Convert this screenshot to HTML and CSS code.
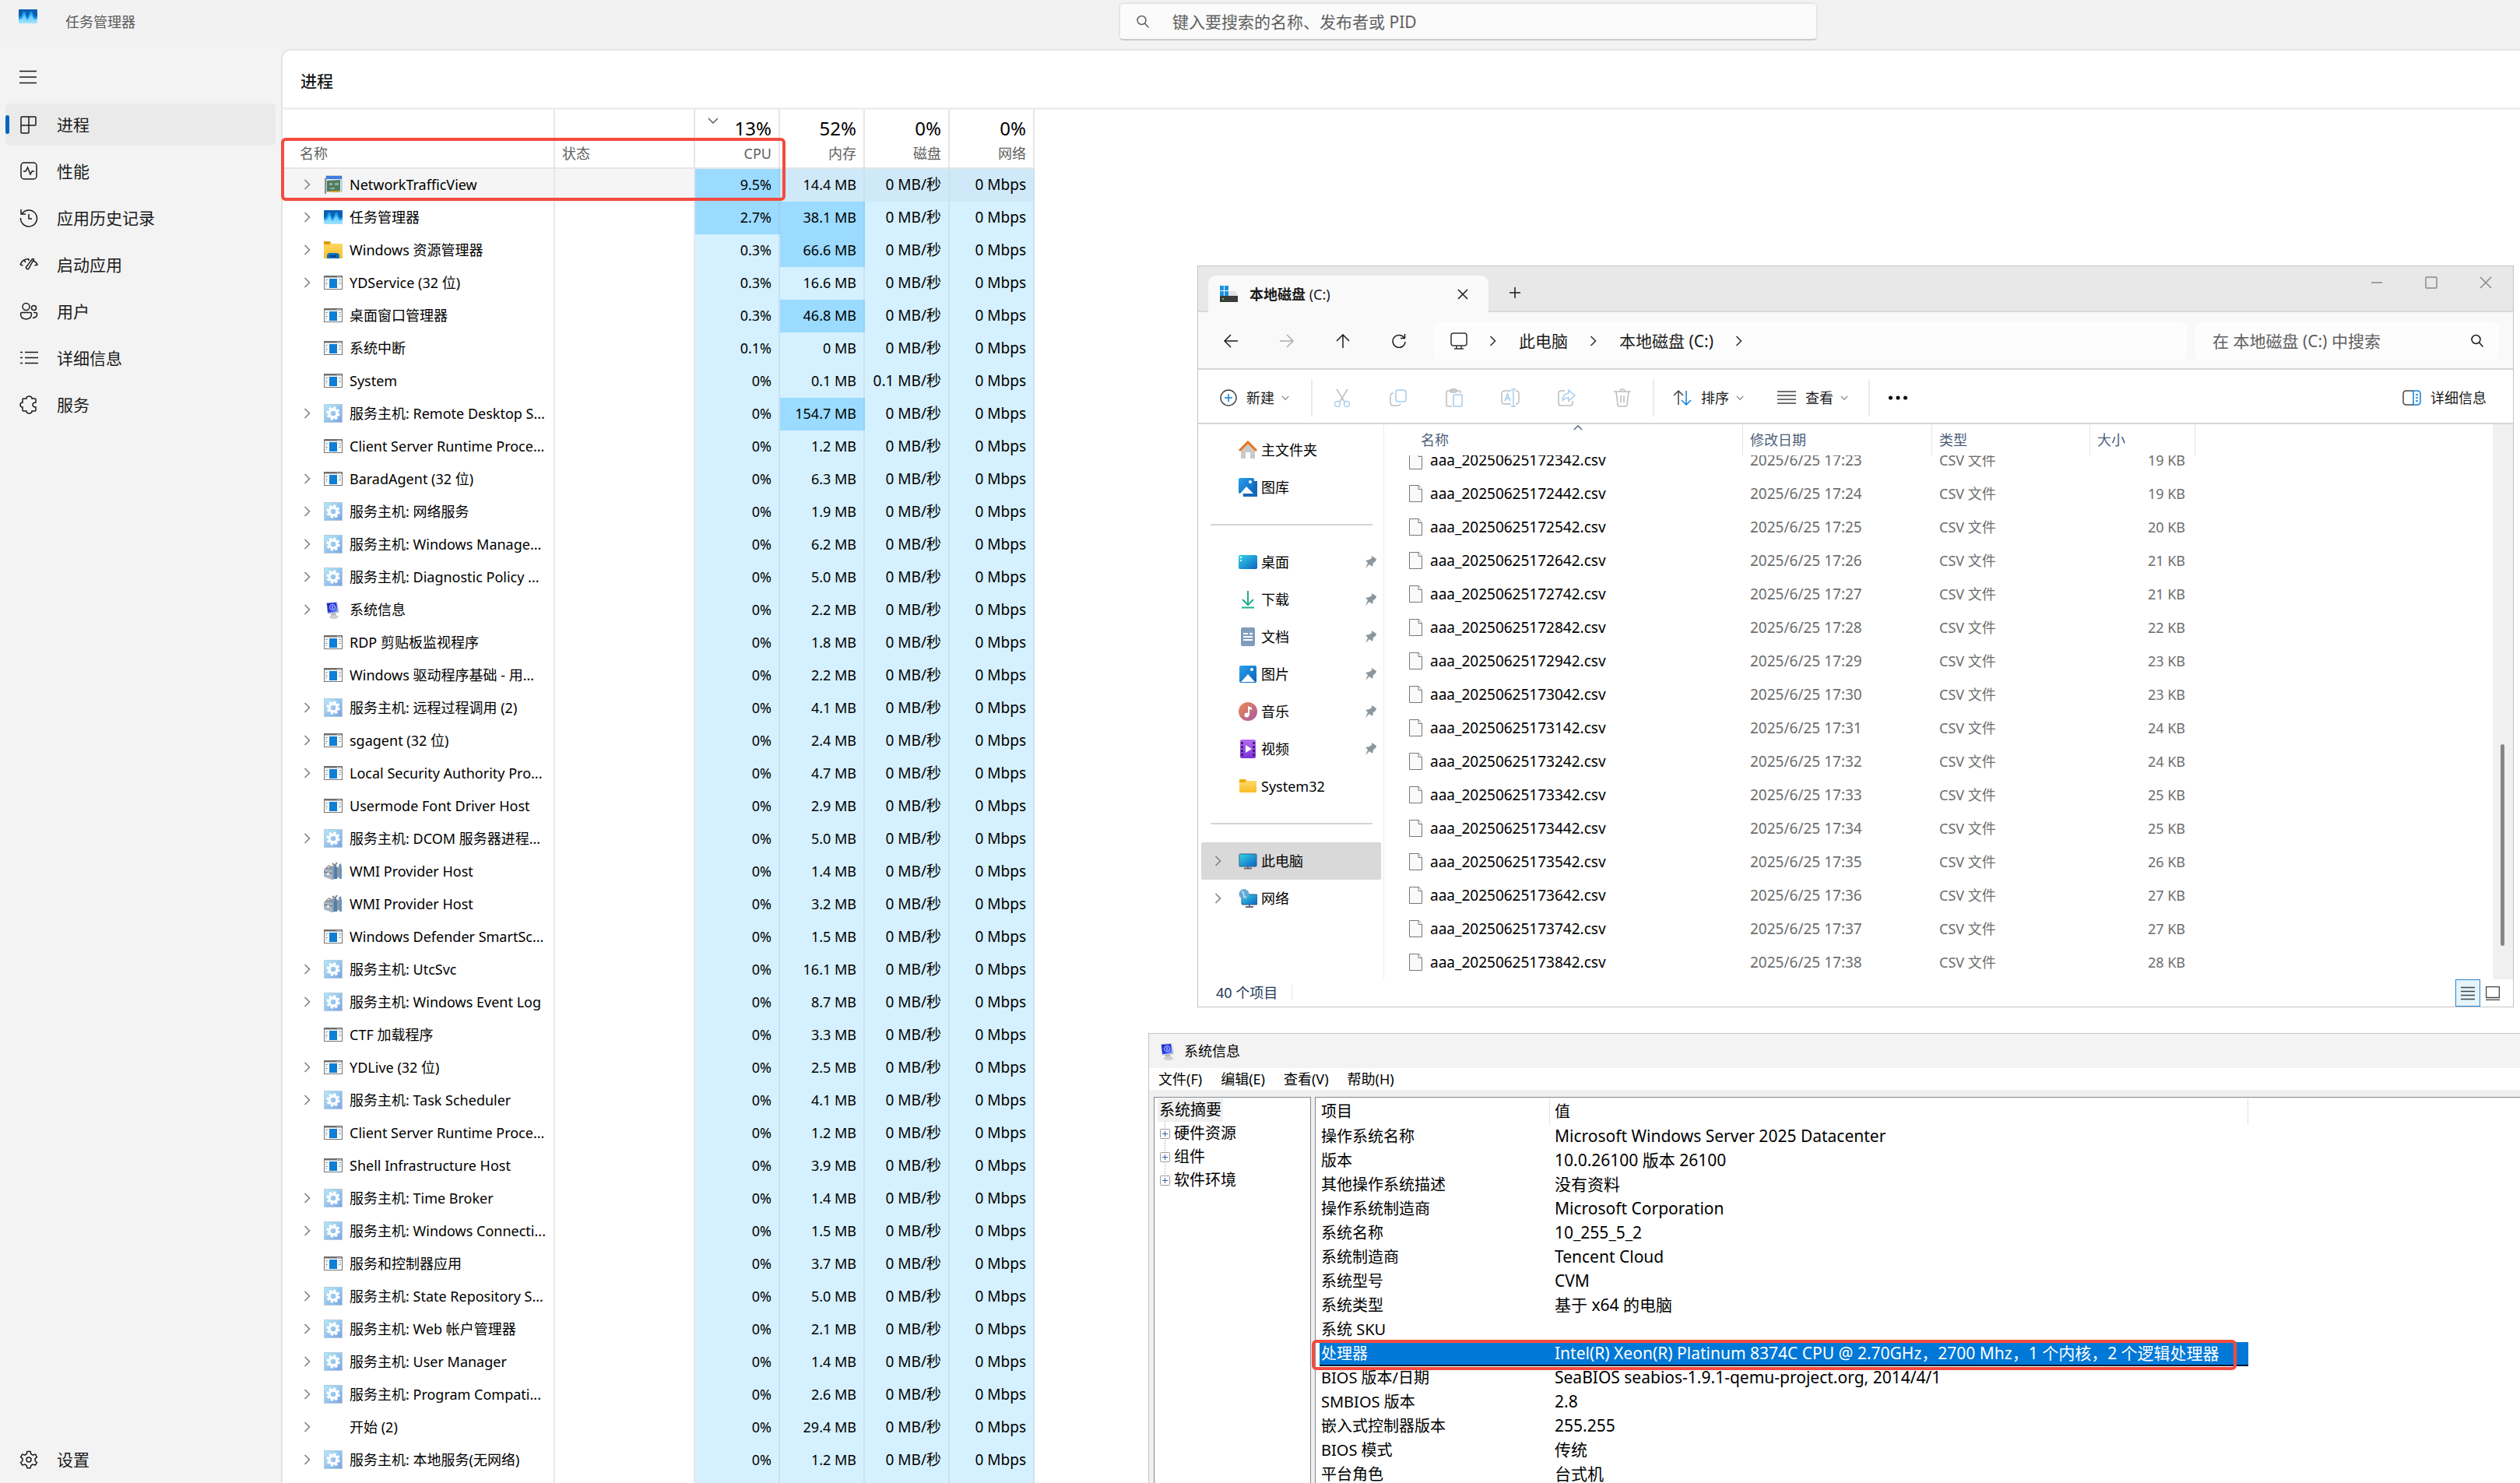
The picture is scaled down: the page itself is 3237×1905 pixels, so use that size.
FILE: index.html
```html
<!DOCTYPE html>
<html lang="zh-CN">
<head>
<meta charset="utf-8">
<title>任务管理器</title>
<link rel="stylesheet" href="styles.css">
</head>
<body>
<svg class="defs" aria-hidden="true">
  <defs>
    <linearGradient id="g-svc" x1="0" y1="0" x2="1" y2="1"><stop offset="0" stop-color="#b4ebf9"/><stop offset="1" stop-color="#7ba2e2"/></linearGradient>
    <linearGradient id="g-blue" x1="0" y1="0" x2="1" y2="1"><stop offset="0" stop-color="#2aa0ea"/><stop offset="1" stop-color="#0a62bd"/></linearGradient>
    <linearGradient id="g-desk" x1="0" y1="0" x2="1" y2="1"><stop offset="0" stop-color="#35d3e6"/><stop offset="1" stop-color="#0d62c4"/></linearGradient>
    <linearGradient id="g-wave" x1="0" y1="0" x2="0" y2="1"><stop offset="0" stop-color="#4cc2f5"/><stop offset="1" stop-color="#a3e4ff"/></linearGradient>
    <linearGradient id="g-fold" x1="0" y1="0" x2="0" y2="1"><stop offset="0" stop-color="#ffd766"/><stop offset="1" stop-color="#f9bf2a"/></linearGradient>
    <linearGradient id="g-music" x1="0" y1="0" x2="1" y2="1"><stop offset="0" stop-color="#f08a4b"/><stop offset="1" stop-color="#a657a6"/></linearGradient>
    <linearGradient id="g-video" x1="0" y1="0" x2="0" y2="1"><stop offset="0" stop-color="#b56cf2"/><stop offset="1" stop-color="#7a32d6"/></linearGradient>
    <linearGradient id="g-scr" x1="0" y1="0" x2="1" y2="1"><stop offset="0" stop-color="#1420b8"/><stop offset=".6" stop-color="#2a3ff0"/><stop offset="1" stop-color="#9db4ff"/></linearGradient>
  </defs>
  <symbol id="tm" viewBox="0 0 24 24"><rect y="3" width="24" height="18" rx="1" fill="#0b5fb3"/><path d="M0 13l3-1 3-6h2l3 8 4-8h2l3 7 4-1v9H0z" fill="#1f9be8"/><path d="M0 16l4-1 3-6 4 8 5-8 4 7 4-1v6H0z" fill="url(#g-wave)"/></symbol>
  <symbol id="app" viewBox="0 0 24 24"><rect x=".5" y="3.500" width="23" height="17" fill="#fff" stroke="#757575"/><path d="M0 4.500h24" stroke="#6b6b6b" stroke-width="2"/><path d="M17 4.500h1m1 0h1m1 0h1" stroke="#fff"/><rect x="7" y="7" width="10" height="12" fill="#0f7fd6"/><path d="M2 8.500h3M2 11h2M2 13.500h3M2 16h2M19 8.500h3M20 11h2M19 13.500h3" stroke="#999"/></symbol>
  <symbol id="svc" viewBox="0 0 24 24"><rect x=".5" y=".5" width="23" height="23" fill="url(#g-svc)" stroke="#b3cbe0"/><circle cx="12" cy="12" r="7.500" fill="none" stroke="#fff" stroke-width="2.500" stroke-dasharray="3.400 2.490"/><circle cx="12" cy="12" r="5" fill="none" stroke="#fff" stroke-width="3.400"/></symbol>
  <symbol id="exp" viewBox="0 0 24 24"><path d="M0 2h8l2 2h14v19H0z" fill="url(#g-fold)"/><path d="M0 1h8l1 2-2 2H0z" fill="#d99b08"/><path d="M4 23v-3q0-4 4-4h8q4 0 4 4v3z" fill="#0f6cbd"/><path d="M8 20h8" stroke="#083a70" stroke-width="2"/></symbol>
  <symbol id="net" viewBox="0 0 24 24"><rect x="3" y="1" width="20" height="20" fill="#dfeaf7" stroke="#9bb"/><rect x="3" y="1" width="20" height="4" fill="#3f7be0"/><path d="M4 7l17-1v14l-17 1z" fill="#4f7a60"/><path d="M7 10h4v3H7zM14 10h5v3h-5zM8 16h6v2H8z" fill="#8fb09c"/><path d="M8 20h12v2H8z" fill="#d8a324"/><path d="M2 4v20" stroke="#8d8d8d" stroke-width="2"/></symbol>
  <symbol id="inf" viewBox="0 0 24 24"><path d="M3 3l14-1 3 14-15 2z" fill="#c8ccd6"/><path d="M4 4l12-1 2 12-13 1z" fill="url(#g-scr)"/><circle cx="11" cy="9" r="3.500" fill="none" stroke="#cdd8ff"/><path d="M11 7v4" stroke="#fff"/><path d="M9 17l6-1 1 4H9z" fill="#b9b9b9"/><ellipse cx="13" cy="21.500" rx="6" ry="2.500" fill="#d0d0d0"/></symbol>
  <symbol id="wmi" viewBox="0 0 24 24"><path d="M0 9l12-4 10 3v11l-11 4L0 19z" fill="#8d9ba8"/><path d="M0 9l11 2v12L0 19z" fill="#a9b7c2"/><path d="M0 13l11 2" stroke="#5a6874"/><path d="M3 9q2-6 6-3" stroke="#555" fill="none"/><path d="M13 22V9l2-7 2 7v13z" fill="#4f7fae"/><path d="M20 22V10l-1-6 3-2 1 6v14z" fill="#6c93bb"/><path d="M11 2l3 3 3-4" fill="none" stroke="#888" stroke-width="2"/><rect x="4" y="14" width="3" height="3" fill="#eee"/></symbol>
  <symbol id="chev" viewBox="0 0 10 16"><path d="M1.500 2l6 6-6 6" fill="none" stroke="currentColor" stroke-width="1.600"/></symbol>
  <symbol id="down" viewBox="0 0 14 8"><path d="M1 1l6 6 6-6" fill="none" stroke="currentColor" stroke-width="1.500"/></symbol>
  <symbol id="search" viewBox="0 0 18 18"><circle cx="7.500" cy="7" r="5.500" fill="none" stroke="currentColor" stroke-width="1.500"/><path d="M11.500 11l5 5.500" stroke="currentColor" stroke-width="1.500"/></symbol>
  <symbol id="pin" viewBox="0 0 16 16"><path d="M9 0l6 4-1 3-3 2-1 5-4-3-5 5 3-7-3-3 5-1 3-2z" fill="#8b979e"/></symbol>
  <symbol id="file" viewBox="0 0 18 24"><path d="M.5 1.500h12l4 5v16H.5z" fill="#fafafa" stroke="#777"/><path d="M12 1.500v5h4.500" fill="#fff" stroke="#777"/></symbol>
</svg>

<main class="desktop">
<section class="taskmgr">
  <header class="tm-bar">
    <div class="tm-title"><svg class="i24"><use href="#tm"/></svg><h1>任务管理器</h1></div>
    <label class="tm-search"><svg class="i18"><use href="#search"/></svg><input type="search" aria-label="搜索进程" placeholder="键入要搜索的名称、发布者或 PID"></label>
  </header>
  <div class="tm-main">
    <nav class="tm-nav">
      <button class="burger" aria-label="菜单"><svg class="i24 line"><path d="M1 4.500h22M1 12h22M1 19.500h22"/></svg></button>
      <a href="#p" class="on"><svg class="i24 line"><path d="M3 2h17q1 0 1 1v9q0 1-1 1h-8v9q0 1-1 1H3q-1 0-1-1V3q0-1 1-1zM12 2v11M2 13h10"/></svg>进程</a>
      <a href="#f"><svg class="i24 line"><rect x="2" y="1" width="20" height="21" rx="4"/><path d="M5 12h3l2.500-5 3.500 9 2-4h3"/></svg>性能</a>
      <a href="#h"><svg class="i24 line"><path d="M2 1v6h6M3 7a10.500 10.500 0 1 1-1.500 5M12 7v6h4"/></svg>应用历史记录</a>
      <a href="#s"><svg class="i24 line"><path d="M1 12q2-7 11-7.500M1 12l3.500 1M18 7q4 2 5 5l-3.500 1M6 6l2 3M12 4.500v2.500M18.500 5l-6 11a2 2 0 1 1-3-2l7-9.500z"/></svg>启动应用</a>
      <a href="#u"><svg class="i24 line"><circle cx="8.500" cy="6" r="4.500"/><circle cx="18.500" cy="7.500" r="3"/><path d="M3 13.500h11q1.500 0 1.500 2 0 6-7 6.500-7-.5-7-6.500 0-2 1.500-2zM18 13.500h3q1.500 0 1.500 2 0 4.500-5.500 5"/></svg>用户</a>
      <a href="#d"><svg class="i24 line"><path d="M7 4.500h17M7 11.500h17M7 18.500h17M1 4.500h3M1 11.500h3M1 18.500h3"/></svg>详细信息</a>
      <a href="#v"><svg class="i24 line"><path d="M5 4h4q0-3 3.500-3T16 4h4q1 0 1 1v4q-4 0-4 3t4 3v4q0 1-1 1h-4q0 3-3.500 3T9 20H5q-1 0-1-1v-4q-3 0-3-3t3-3V5q0-1 1-1z"/></svg>服务</a>
      <a href="#c" class="last"><svg class="i24 line"><circle cx="12" cy="12" r="3"/><path d="M10 1.500h4l.8 3.200 2.400 1.400 3.200-1 2 3.500-2.400 2.300v2.400l2.400 2.300-2 3.500-3.200-1-2.400 1.400-.8 3.200h-4l-.8-3.200-2.400-1.400-3.200 1-2-3.500L4 13.300v-2.400L1.600 8.600l2-3.500 3.200 1 2.400-1.400z"/></svg>设置</a>
    </nav>
    <section class="tm-pane">
      <h2>进程</h2>
      <table class="procs">
        <thead><tr>
          <th class="c-name">名称</th><th class="c-state">状态</th>
          <th class="c-num"><svg class="sort"><use href="#down"/></svg><b>13%</b>CPU</th><th class="c-num"><b>52%</b>内存</th><th class="c-num"><b>0%</b>磁盘</th><th class="c-num"><b>0%</b>网络</th>
        </tr></thead>
        <tbody>
        <tr class="sel"><td><div><svg class="ch"><use href="#chev"/></svg><svg class="i24"><use href="#net"/></svg>NetworkTrafficView</div></td><td></td><td class="hot">9.5%</td><td>14.4 MB</td><td>0 MB/秒</td><td>0 Mbps</td></tr>
        <tr><td><div><svg class="ch"><use href="#chev"/></svg><svg class="i24"><use href="#tm"/></svg>任务管理器</div></td><td></td><td class="hot">2.7%</td><td class="hot">38.1 MB</td><td>0 MB/秒</td><td>0 Mbps</td></tr>
        <tr><td><div><svg class="ch"><use href="#chev"/></svg><svg class="i24"><use href="#exp"/></svg>Windows 资源管理器</div></td><td></td><td>0.3%</td><td class="hot">66.6 MB</td><td>0 MB/秒</td><td>0 Mbps</td></tr>
        <tr><td><div><svg class="ch"><use href="#chev"/></svg><svg class="i24"><use href="#app"/></svg>YDService (32 位)</div></td><td></td><td>0.3%</td><td>16.6 MB</td><td>0 MB/秒</td><td>0 Mbps</td></tr>
        <tr><td><div><svg class="ch"></svg><svg class="i24"><use href="#app"/></svg>桌面窗口管理器</div></td><td></td><td>0.3%</td><td class="hot">46.8 MB</td><td>0 MB/秒</td><td>0 Mbps</td></tr>
        <tr><td><div><svg class="ch"></svg><svg class="i24"><use href="#app"/></svg>系统中断</div></td><td></td><td>0.1%</td><td>0 MB</td><td>0 MB/秒</td><td>0 Mbps</td></tr>
        <tr><td><div><svg class="ch"></svg><svg class="i24"><use href="#app"/></svg>System</div></td><td></td><td>0%</td><td>0.1 MB</td><td>0.1 MB/秒</td><td>0 Mbps</td></tr>
        <tr><td><div><svg class="ch"><use href="#chev"/></svg><svg class="i24"><use href="#svc"/></svg>服务主机: Remote Desktop S...</div></td><td></td><td>0%</td><td class="hot">154.7 MB</td><td>0 MB/秒</td><td>0 Mbps</td></tr>
        <tr><td><div><svg class="ch"></svg><svg class="i24"><use href="#app"/></svg>Client Server Runtime Proce...</div></td><td></td><td>0%</td><td>1.2 MB</td><td>0 MB/秒</td><td>0 Mbps</td></tr>
        <tr><td><div><svg class="ch"><use href="#chev"/></svg><svg class="i24"><use href="#app"/></svg>BaradAgent (32 位)</div></td><td></td><td>0%</td><td>6.3 MB</td><td>0 MB/秒</td><td>0 Mbps</td></tr>
        <tr><td><div><svg class="ch"><use href="#chev"/></svg><svg class="i24"><use href="#svc"/></svg>服务主机: 网络服务</div></td><td></td><td>0%</td><td>1.9 MB</td><td>0 MB/秒</td><td>0 Mbps</td></tr>
        <tr><td><div><svg class="ch"><use href="#chev"/></svg><svg class="i24"><use href="#svc"/></svg>服务主机: Windows Manage...</div></td><td></td><td>0%</td><td>6.2 MB</td><td>0 MB/秒</td><td>0 Mbps</td></tr>
        <tr><td><div><svg class="ch"><use href="#chev"/></svg><svg class="i24"><use href="#svc"/></svg>服务主机: Diagnostic Policy ...</div></td><td></td><td>0%</td><td>5.0 MB</td><td>0 MB/秒</td><td>0 Mbps</td></tr>
        <tr><td><div><svg class="ch"><use href="#chev"/></svg><svg class="i24"><use href="#inf"/></svg>系统信息</div></td><td></td><td>0%</td><td>2.2 MB</td><td>0 MB/秒</td><td>0 Mbps</td></tr>
        <tr><td><div><svg class="ch"></svg><svg class="i24"><use href="#app"/></svg>RDP 剪贴板监视程序</div></td><td></td><td>0%</td><td>1.8 MB</td><td>0 MB/秒</td><td>0 Mbps</td></tr>
        <tr><td><div><svg class="ch"></svg><svg class="i24"><use href="#app"/></svg>Windows 驱动程序基础 - 用...</div></td><td></td><td>0%</td><td>2.2 MB</td><td>0 MB/秒</td><td>0 Mbps</td></tr>
        <tr><td><div><svg class="ch"><use href="#chev"/></svg><svg class="i24"><use href="#svc"/></svg>服务主机: 远程过程调用 (2)</div></td><td></td><td>0%</td><td>4.1 MB</td><td>0 MB/秒</td><td>0 Mbps</td></tr>
        <tr><td><div><svg class="ch"><use href="#chev"/></svg><svg class="i24"><use href="#app"/></svg>sgagent (32 位)</div></td><td></td><td>0%</td><td>2.4 MB</td><td>0 MB/秒</td><td>0 Mbps</td></tr>
        <tr><td><div><svg class="ch"><use href="#chev"/></svg><svg class="i24"><use href="#app"/></svg>Local Security Authority Pro...</div></td><td></td><td>0%</td><td>4.7 MB</td><td>0 MB/秒</td><td>0 Mbps</td></tr>
        <tr><td><div><svg class="ch"></svg><svg class="i24"><use href="#app"/></svg>Usermode Font Driver Host</div></td><td></td><td>0%</td><td>2.9 MB</td><td>0 MB/秒</td><td>0 Mbps</td></tr>
        <tr><td><div><svg class="ch"><use href="#chev"/></svg><svg class="i24"><use href="#svc"/></svg>服务主机: DCOM 服务器进程...</div></td><td></td><td>0%</td><td>5.0 MB</td><td>0 MB/秒</td><td>0 Mbps</td></tr>
        <tr><td><div><svg class="ch"></svg><svg class="i24"><use href="#wmi"/></svg>WMI Provider Host</div></td><td></td><td>0%</td><td>1.4 MB</td><td>0 MB/秒</td><td>0 Mbps</td></tr>
        <tr><td><div><svg class="ch"></svg><svg class="i24"><use href="#wmi"/></svg>WMI Provider Host</div></td><td></td><td>0%</td><td>3.2 MB</td><td>0 MB/秒</td><td>0 Mbps</td></tr>
        <tr><td><div><svg class="ch"></svg><svg class="i24"><use href="#app"/></svg>Windows Defender SmartSc...</div></td><td></td><td>0%</td><td>1.5 MB</td><td>0 MB/秒</td><td>0 Mbps</td></tr>
        <tr><td><div><svg class="ch"><use href="#chev"/></svg><svg class="i24"><use href="#svc"/></svg>服务主机: UtcSvc</div></td><td></td><td>0%</td><td>16.1 MB</td><td>0 MB/秒</td><td>0 Mbps</td></tr>
        <tr><td><div><svg class="ch"><use href="#chev"/></svg><svg class="i24"><use href="#svc"/></svg>服务主机: Windows Event Log</div></td><td></td><td>0%</td><td>8.7 MB</td><td>0 MB/秒</td><td>0 Mbps</td></tr>
        <tr><td><div><svg class="ch"></svg><svg class="i24"><use href="#app"/></svg>CTF 加载程序</div></td><td></td><td>0%</td><td>3.3 MB</td><td>0 MB/秒</td><td>0 Mbps</td></tr>
        <tr><td><div><svg class="ch"><use href="#chev"/></svg><svg class="i24"><use href="#app"/></svg>YDLive (32 位)</div></td><td></td><td>0%</td><td>2.5 MB</td><td>0 MB/秒</td><td>0 Mbps</td></tr>
        <tr><td><div><svg class="ch"><use href="#chev"/></svg><svg class="i24"><use href="#svc"/></svg>服务主机: Task Scheduler</div></td><td></td><td>0%</td><td>4.1 MB</td><td>0 MB/秒</td><td>0 Mbps</td></tr>
        <tr><td><div><svg class="ch"></svg><svg class="i24"><use href="#app"/></svg>Client Server Runtime Proce...</div></td><td></td><td>0%</td><td>1.2 MB</td><td>0 MB/秒</td><td>0 Mbps</td></tr>
        <tr><td><div><svg class="ch"></svg><svg class="i24"><use href="#app"/></svg>Shell Infrastructure Host</div></td><td></td><td>0%</td><td>3.9 MB</td><td>0 MB/秒</td><td>0 Mbps</td></tr>
        <tr><td><div><svg class="ch"><use href="#chev"/></svg><svg class="i24"><use href="#svc"/></svg>服务主机: Time Broker</div></td><td></td><td>0%</td><td>1.4 MB</td><td>0 MB/秒</td><td>0 Mbps</td></tr>
        <tr><td><div><svg class="ch"><use href="#chev"/></svg><svg class="i24"><use href="#svc"/></svg>服务主机: Windows Connecti...</div></td><td></td><td>0%</td><td>1.5 MB</td><td>0 MB/秒</td><td>0 Mbps</td></tr>
        <tr><td><div><svg class="ch"></svg><svg class="i24"><use href="#app"/></svg>服务和控制器应用</div></td><td></td><td>0%</td><td>3.7 MB</td><td>0 MB/秒</td><td>0 Mbps</td></tr>
        <tr><td><div><svg class="ch"><use href="#chev"/></svg><svg class="i24"><use href="#svc"/></svg>服务主机: State Repository S...</div></td><td></td><td>0%</td><td>5.0 MB</td><td>0 MB/秒</td><td>0 Mbps</td></tr>
        <tr><td><div><svg class="ch"><use href="#chev"/></svg><svg class="i24"><use href="#svc"/></svg>服务主机: Web 帐户管理器</div></td><td></td><td>0%</td><td>2.1 MB</td><td>0 MB/秒</td><td>0 Mbps</td></tr>
        <tr><td><div><svg class="ch"><use href="#chev"/></svg><svg class="i24"><use href="#svc"/></svg>服务主机: User Manager</div></td><td></td><td>0%</td><td>1.4 MB</td><td>0 MB/秒</td><td>0 Mbps</td></tr>
        <tr><td><div><svg class="ch"><use href="#chev"/></svg><svg class="i24"><use href="#svc"/></svg>服务主机: Program Compati...</div></td><td></td><td>0%</td><td>2.6 MB</td><td>0 MB/秒</td><td>0 Mbps</td></tr>
        <tr><td><div><svg class="ch"><use href="#chev"/></svg><svg class="i24"></svg>开始 (2)</div></td><td></td><td>0%</td><td>29.4 MB</td><td>0 MB/秒</td><td>0 Mbps</td></tr>
        <tr><td><div><svg class="ch"><use href="#chev"/></svg><svg class="i24"><use href="#svc"/></svg>服务主机: 本地服务(无网络)</div></td><td></td><td>0%</td><td>1.2 MB</td><td>0 MB/秒</td><td>0 Mbps</td></tr>
        <tr><td></td><td></td><td></td><td></td><td></td><td></td></tr>
        </tbody>
      </table>
    </section>
  </div>
</section>

<section class="explorer">
  <header class="ex-title">
    <div class="tab"><svg class="i24"><path d="M1 1h5v6H1zM7 1h5v6H7zM1 8h5v6H1zM7 8h5v6H7z" fill="#1a93e6"/><path d="M12 8h9l3 6H12z" fill="#e3e3e3"/><path d="M1 14h23v8H1z" fill="#3b3b3b"/><path d="M4 17h2v2H4z" fill="#3fd33f"/></svg><span><strong>本地磁盘</strong> (C:)</span><button aria-label="关闭标签页"><svg class="i14 line"><path d="M1 1l12 12M13 1L1 13"/></svg></button></div>
    <button class="plus" aria-label="新标签页"><svg class="i14 line"><path d="M7 0v14M0 7h14"/></svg></button>
    <div class="wctl"><button aria-label="最小化"><svg class="i16 line"><path d="M1 8h14"/></svg></button><button aria-label="最大化"><svg class="i16 line"><rect x="1" y="1" width="14" height="14" rx="1"/></svg></button><button aria-label="关闭"><svg class="i16 line"><path d="M1 1l14 14M15 1L1 15"/></svg></button></div>
  </header>
  <div class="ex-nav">
    <button aria-label="后退"><svg class="i18 line"><path d="M18 9H1M9 1L1 9l8 8"/></svg></button>
    <button aria-label="前进" disabled><svg class="i18 line"><path d="M0 9h17M9 1l8 8-8 8"/></svg></button>
    <button aria-label="上移"><svg class="i18 line"><path d="M9 18V1M1 9l8-8 8 8"/></svg></button>
    <button aria-label="刷新"><svg class="i18 line"><path d="M16 5.500A8 8 0 1 0 17 10M16.500 0v5.500H11"/></svg></button>
    <nav class="addr"><svg class="i22 line"><rect x="1" y="1" width="20" height="16" rx="3"/><path d="M8 17v4M14 17v4M5 21h12"/></svg><svg class="ch"><use href="#chev"/></svg><a href="#pc">此电脑</a><svg class="ch"><use href="#chev"/></svg><a href="#cd">本地磁盘 (C:)</a><svg class="ch"><use href="#chev"/></svg></nav>
    <label class="ex-search"><input type="search" aria-label="搜索文件" placeholder="在 本地磁盘 (C:) 中搜索"><svg class="i18"><use href="#search"/></svg></label>
  </div>
  <div class="ex-tools">
    <button class="t-new"><svg class="i22 line"><circle cx="11" cy="11" r="10"/><path class="bl" d="M11 6v10M6 11h10"/></svg>新建<svg class="dn"><use href="#down"/></svg></button>
    <i></i>
    <div class="t-off">
      <button disabled aria-label="剪切"><svg class="i24 line"><path d="M5 1l10 16M19 1L9 17"/><circle class="bl" cx="6" cy="20" r="3.500"/><circle class="bl" cx="18" cy="20" r="3.500"/></svg></button>
      <button disabled aria-label="复制"><svg class="i24 line"><path d="M6 6q-4 0-4 4v8q0 4 4 4h5q3 0 4-2"/><rect class="bl" x="9" y="2" width="13" height="15" rx="3"/></svg></button>
      <button disabled aria-label="粘贴"><svg class="i24 line"><path d="M9 23H4q-2 0-2-2V5q0-2 2-2h14q2 0 2 2v1"/><rect x="7" y="1" width="8" height="4" rx="2"/><rect class="bl" x="11" y="8" width="11" height="15" rx="2"/></svg></button>
      <button disabled aria-label="重命名"><svg class="i24 line"><path d="M13 3H5q-4 0-4 4v9q0 4 4 4h8M19 3q4 0 4 4v9q0 4-4 4"/><path class="bl" d="M16 1v22M13 1h6M13 23h6M5 16l3.500-9 3.500 9M6 13h5"/></svg></button>
      <button disabled aria-label="共享"><svg class="i24 line"><path d="M10 3H5Q2 3 2 6v13q0 3 3 3h12q3 0 3-3v-3"/><path class="bl" d="M15 2l8 7-8 7v-4q-6 0-8 4 0-9 8-10z"/></svg></button>
      <button disabled aria-label="删除"><svg class="i24 line"><path d="M1 4h22M9 4q0-3 3-3t3 3M4 4l2 17q0 2 2 2h8q2 0 2-2l2-17M10 9v9M14 9v9"/></svg></button>
    </div>
    <i></i>
    <button class="t-sort"><svg class="i24 line"><path d="M7 21V3M1 9l6-6 6 6"/><path class="bl" d="M17 3v18M11 15l6 6 6-6"/></svg>排序<svg class="dn"><use href="#down"/></svg></button>
    <button class="t-view"><svg class="i24 line"><path d="M0 4h24M0 9h24M0 14h24M0 19h24"/></svg>查看<svg class="dn"><use href="#down"/></svg></button>
    <i></i>
    <button class="t-more" aria-label="更多"><svg class="i24"><circle cx="2.500" cy="12" r="2.500"/><circle cx="12" cy="12" r="2.500"/><circle cx="21.500" cy="12" r="2.500"/></svg></button>
    <button class="t-det"><svg class="i24 line"><path d="M14 3H5Q1 3 1 7v10q0 4 4 4h9"/><path class="bl" d="M14 3h5q4 0 4 4v10q0 4-4 4h-5zM17 8h3M17 12h3M17 16h3"/></svg>详细信息</button>
  </div>
  <div class="ex-body">
    <nav class="tree">
      <a href="#1"><svg class="ch"></svg><svg class="i24"><path d="M3 11l9-8 9 8v12h-6v-8H9v8H3z" fill="#c9c9c9"/><path d="M1 13L12 2l11 11" fill="none" stroke="#e8731c" stroke-width="3"/></svg>主文件夹</a>
      <a href="#2"><svg class="ch"></svg><svg class="i24"><path d="M4 4h20v20H6z" fill="#1967b8"/><rect width="20" height="20" rx="2" fill="url(#g-blue)"/><path d="M2 20l8-9 9 9z" fill="#fff"/><circle cx="15" cy="5" r="2" fill="#fff"/></svg>图库</a>
      <hr>
      <a href="#3"><svg class="ch"></svg><svg class="i24"><rect y="3" width="24" height="18" rx="2" fill="url(#g-desk)"/><path d="M2 6h2M2 10h2" stroke="#fff" stroke-width="2"/></svg>桌面<svg class="pin"><use href="#pin"/></svg></a>
      <a href="#4"><svg class="ch"></svg><svg class="i24"><path d="M12 1v17M5 12l7 7 7-7M4 22.500h16" fill="none" stroke="#1fae8b" stroke-width="2"/></svg>下载<svg class="pin"><use href="#pin"/></svg></a>
      <a href="#5"><svg class="ch"></svg><svg class="i24"><rect x="3" width="18" height="24" rx="2" fill="#7f9cbb"/><path d="M6 8h6M6 12h12M6 16h12M14 8h4" stroke="#fff" stroke-width="2"/></svg>文档<svg class="pin"><use href="#pin"/></svg></a>
      <a href="#6"><svg class="ch"></svg><svg class="i24"><rect x="1" y="1" width="22" height="22" rx="2" fill="url(#g-blue)"/><path d="M3 22l9-10 9 10z" fill="#fff"/><circle cx="17" cy="6" r="2" fill="#fff"/></svg>图片<svg class="pin"><use href="#pin"/></svg></a>
      <a href="#7"><svg class="ch"></svg><svg class="i24"><circle cx="12" cy="12" r="12" fill="url(#g-music)"/><path d="M12 16V5l5 2v3l-3-1v7z" fill="#fff"/><circle cx="10.500" cy="16.500" r="3" fill="#fff"/></svg>音乐<svg class="pin"><use href="#pin"/></svg></a>
      <a href="#8"><svg class="ch"></svg><svg class="i24"><rect x="2" width="20" height="24" rx="2" fill="url(#g-video)"/><path d="M4.500 3v18M19.500 3v18" stroke="#3c1470" stroke-width="2.500" stroke-dasharray="3 2"/><path d="M9 7l8 5-8 5z" fill="#fff"/></svg>视频<svg class="pin"><use href="#pin"/></svg></a>
      <a href="#9"><svg class="ch"></svg><svg class="i24"><path d="M1 5h22v15H1z" fill="url(#g-fold)"/><path d="M1 3h8l1 2-2 2H1z" fill="#efad10"/></svg>System32</a>
      <hr>
      <a href="#10" class="on"><svg class="ch"><use href="#chev"/></svg><svg class="i24"><rect x="1" y="3" width="22" height="16" rx="1" fill="url(#g-desk)" stroke="#2c5f85"/><path d="M12 19v2M7 21.500h10" stroke="#667" stroke-width="2"/></svg>此电脑</a>
      <a href="#11"><svg class="ch"><use href="#chev"/></svg><svg class="i24"><rect x="4" y="7" width="20" height="13" rx="1" fill="url(#g-desk)" stroke="#2c5f85"/><path d="M14 20v2M9 23h10" stroke="#667" stroke-width="2"/><circle cx="7" cy="6.500" r="6.500" fill="#63a9d3"/><path d="M3 3q4-1 4 3t4 5q-5 1-5-3T3 3" fill="#d3ecf8"/></svg>网络</a>
    </nav>
    <table class="files">
      <thead><tr><th class="f-name"><svg class="up"><use href="#down"/></svg>名称</th><th class="f-date">修改日期</th><th class="f-type">类型</th><th class="f-size">大小</th><th></th></tr></thead>
      <tbody>
      <tr class="cut"><td><div><svg class="fi"><use href="#file"/></svg><span>aaa_20250625172342.csv</span></div></td><td><div><span>2025/6/25 17:23</span></div></td><td><div><span>CSV 文件</span></div></td><td><div><span>19 KB</span></div></td><td></td></tr>
      <tr><td><div><svg class="fi"><use href="#file"/></svg>aaa_20250625172442.csv</div></td><td>2025/6/25 17:24</td><td>CSV 文件</td><td>19 KB</td><td></td></tr>
      <tr><td><div><svg class="fi"><use href="#file"/></svg>aaa_20250625172542.csv</div></td><td>2025/6/25 17:25</td><td>CSV 文件</td><td>20 KB</td><td></td></tr>
      <tr><td><div><svg class="fi"><use href="#file"/></svg>aaa_20250625172642.csv</div></td><td>2025/6/25 17:26</td><td>CSV 文件</td><td>21 KB</td><td></td></tr>
      <tr><td><div><svg class="fi"><use href="#file"/></svg>aaa_20250625172742.csv</div></td><td>2025/6/25 17:27</td><td>CSV 文件</td><td>21 KB</td><td></td></tr>
      <tr><td><div><svg class="fi"><use href="#file"/></svg>aaa_20250625172842.csv</div></td><td>2025/6/25 17:28</td><td>CSV 文件</td><td>22 KB</td><td></td></tr>
      <tr><td><div><svg class="fi"><use href="#file"/></svg>aaa_20250625172942.csv</div></td><td>2025/6/25 17:29</td><td>CSV 文件</td><td>23 KB</td><td></td></tr>
      <tr><td><div><svg class="fi"><use href="#file"/></svg>aaa_20250625173042.csv</div></td><td>2025/6/25 17:30</td><td>CSV 文件</td><td>23 KB</td><td></td></tr>
      <tr><td><div><svg class="fi"><use href="#file"/></svg>aaa_20250625173142.csv</div></td><td>2025/6/25 17:31</td><td>CSV 文件</td><td>24 KB</td><td></td></tr>
      <tr><td><div><svg class="fi"><use href="#file"/></svg>aaa_20250625173242.csv</div></td><td>2025/6/25 17:32</td><td>CSV 文件</td><td>24 KB</td><td></td></tr>
      <tr><td><div><svg class="fi"><use href="#file"/></svg>aaa_20250625173342.csv</div></td><td>2025/6/25 17:33</td><td>CSV 文件</td><td>25 KB</td><td></td></tr>
      <tr><td><div><svg class="fi"><use href="#file"/></svg>aaa_20250625173442.csv</div></td><td>2025/6/25 17:34</td><td>CSV 文件</td><td>25 KB</td><td></td></tr>
      <tr><td><div><svg class="fi"><use href="#file"/></svg>aaa_20250625173542.csv</div></td><td>2025/6/25 17:35</td><td>CSV 文件</td><td>26 KB</td><td></td></tr>
      <tr><td><div><svg class="fi"><use href="#file"/></svg>aaa_20250625173642.csv</div></td><td>2025/6/25 17:36</td><td>CSV 文件</td><td>27 KB</td><td></td></tr>
      <tr><td><div><svg class="fi"><use href="#file"/></svg>aaa_20250625173742.csv</div></td><td>2025/6/25 17:37</td><td>CSV 文件</td><td>27 KB</td><td></td></tr>
      <tr><td><div><svg class="fi"><use href="#file"/></svg>aaa_20250625173842.csv</div></td><td>2025/6/25 17:38</td><td>CSV 文件</td><td>28 KB</td><td></td></tr>
      </tbody>
    </table>
    <div class="bar"><span></span></div>
  </div>
  <footer class="ex-status"><span>40 个项目</span><button class="on" aria-label="详细信息视图"><svg class="i18 line"><path d="M0 1.500h18M0 6.500h18M0 11.500h18M0 16.500h18"/></svg></button><button aria-label="缩略图视图"><svg class="i18 line"><path d="M.5.500h17v14H.5zM0 17.500h18"/></svg></button></footer>
</section>

<section class="sysinfo">
  <header><svg class="i24"><use href="#inf"/></svg>系统信息</header>
  <div class="menu"><button>文件(F)</button><button>编辑(E)</button><button>查看(V)</button><button>帮助(H)</button></div>
  <div class="si-body">
    <ul>
      <li class="root"><span>系统摘要</span></li>
      <li><svg class="ex"><path class="dot" d="M9.500 0v30"/><rect x="3.500" y="9.500" width="12" height="12" rx="1"/><path class="pl" d="M9.500 12v7M6 15.500h7"/></svg>硬件资源</li>
      <li><svg class="ex"><path class="dot" d="M9.500 0v30"/><rect x="3.500" y="9.500" width="12" height="12" rx="1"/><path class="pl" d="M9.500 12v7M6 15.500h7"/></svg>组件</li>
      <li><svg class="ex"><path class="dot" d="M9.500 0v10"/><rect x="3.500" y="9.500" width="12" height="12" rx="1"/><path class="pl" d="M9.500 12v7M6 15.500h7"/></svg>软件环境</li>
    </ul>
    <div class="si-list">
    <table>
      <thead><tr><th class="k">项目</th><th class="v">值</th></tr></thead>
      <tbody>
      <tr><td>操作系统名称</td><td>Microsoft Windows Server 2025 Datacenter</td></tr>
      <tr><td>版本</td><td>10.0.26100 版本 26100</td></tr>
      <tr><td>其他操作系统描述</td><td>没有资料</td></tr>
      <tr><td>操作系统制造商</td><td>Microsoft Corporation</td></tr>
      <tr><td>系统名称</td><td>10_255_5_2</td></tr>
      <tr><td>系统制造商</td><td>Tencent Cloud</td></tr>
      <tr><td>系统型号</td><td>CVM</td></tr>
      <tr><td>系统类型</td><td>基于 x64 的电脑</td></tr>
      <tr><td>系统 SKU</td><td></td></tr>
      <tr class="on"><td>处理器</td><td>Intel(R) Xeon(R) Platinum 8374C CPU @ 2.70GHz，2700 Mhz，1 个内核，2 个逻辑处理器</td></tr>
      <tr><td>BIOS 版本/日期</td><td>SeaBIOS seabios-1.9.1-qemu-project.org, 2014/4/1</td></tr>
      <tr><td>SMBIOS 版本</td><td>2.8</td></tr>
      <tr><td>嵌入式控制器版本</td><td>255.255</td></tr>
      <tr><td>BIOS 模式</td><td>传统</td></tr>
      <tr><td>平台角色</td><td>台式机</td></tr>
      </tbody>
    </table>
    </div>
  </div>
</section>
<div class="mark mark-proc"></div>
<div class="mark mark-cpu"></div>
</main>
</body>
</html>
```
FILE: styles.css
```css
* { box-sizing: border-box; }
body { margin: 0; font: 18px/24px "Noto Sans", "Noto Sans CJK SC", sans-serif; color: #000; background: #fff; }
h1, h2, ul { margin: 0; padding: 0; font-weight: 400; }
a { color: inherit; text-decoration: none; }
button, input { font: inherit; color: inherit; background: none; border: 0; padding: 0; margin: 0; outline: 0; }
button { display: flex; align-items: center; }
input::placeholder { color: #606060; opacity: 1; }
table { border-collapse: separate; border-spacing: 0; table-layout: fixed; }
th { font-weight: 400; text-align: left; }
td, th { padding: 0; white-space: nowrap; }
svg { flex: none; display: block; }
.defs { position: absolute; width: 0; height: 0; }
.i24 { width: 24px; height: 24px; }
.i22 { width: 22px; height: 22px; }
.i18 { width: 18px; height: 18px; }
.i16 { width: 16px; height: 16px; }
.i14 { width: 14px; height: 14px; }
.line { fill: none; stroke: currentColor; stroke-width: 1.5; }
.ch { width: 10px; height: 16px; color: #808080; }
.bl { stroke: #0f7fd8; }

.desktop { position: relative; height: 100vh; overflow: hidden; }

/* task manager */
.taskmgr { display: flex; flex-direction: column; height: 100%; background: #f3f3f3; }
.tm-bar { display: flex; flex: none; height: 63px; background: #f2f2f2; }
.tm-title { display: flex; width: 1437px; padding: 9px 0 0 24px; gap: 36px; }
.tm-title h1 { font-size: 18px; line-height: 38px; color: #5c5c5c; }
.tm-search { display: flex; align-items: center; gap: 29px; width: 898px; height: 49px; margin-top: 3px; padding-left: 20px; background: #fbfbfb; border: 2px solid #e5e5e5; border-bottom-color: #cacaca; border-radius: 6px; color: #606060; }
.tm-search input { flex: 1; font-size: 21px; }
.tm-main { display: flex; flex: 1; min-height: 0; }
.tm-nav { display: flex; flex-direction: column; gap: 6px; width: 361px; padding: 0 7px 3px; font-size: 21px; color: #1a1a1a; }
.tm-nav a { position: relative; display: flex; align-items: center; gap: 24px; height: 54px; padding-left: 18px; border-radius: 6px; }
.tm-nav a.on { background: #eaeaea; }
.tm-nav a.on::before { content: ""; position: absolute; left: 0; top: 15px; width: 5px; height: 24px; border-radius: 3px; background: #0067c0; }
.tm-nav a.last { margin-top: auto; }
.burger { height: 64px; padding: 8px 0 0 17px; }
.tm-pane { flex: 1; background: #fff; border: solid #e5e5e5; border-width: 2px 0 0 2px; border-top-left-radius: 12px; overflow: hidden; }
.tm-pane h2 { height: 76px; padding: 5px 0 0 23px; border-bottom: 3px solid #efefef; font-size: 21px; font-weight: 500; line-height: 68px; color: #1a1a1a; }
.procs { width: 966px; }
.procs th { position: relative; height: 76px; padding-bottom: 6px; vertical-align: bottom; color: #5f5f5f; border-right: 2px solid #e6e6e6; border-bottom: 2px solid #e6e6e6; }
.procs .c-name { width: 350px; padding-left: 22px; }
.procs .c-state { width: 180px; padding-left: 9px; }
.procs .c-num { width: 109px; padding-right: 9px; text-align: right; }
.procs b { display: block; font-size: 24px; font-weight: 400; line-height: 32px; margin-bottom: 4px; color: #000; }
.sort { position: absolute; left: 16px; top: 10px; width: 14px; height: 8px; }
.procs td { height: 42px; padding-bottom: 2px; border-right: 2px solid #e8e8e8; }
.procs td div { display: flex; align-items: center; padding-left: 27px; }
.procs td .i24 { margin: 0 9px 0 16px; }
.procs td:nth-child(n+3) { padding-right: 9px; text-align: right; background: #d5f0fe; border-right-color: #cbe2ee; }
.procs td:nth-child(n+5) { font-size: 19px; }
.procs .sel td { background: #f5f5f5; }
.procs .sel td:nth-child(n+3) { background: #cfe9f8; }
.procs tr td.hot:nth-child(n) { background: #9bdbff; border-right-color: #9bd0f0; }

/* file explorer */
.explorer { position: absolute; left: 1538px; right: 8px; top: 341px; background: #fff; border: 1px solid #c4c4c4; color: #1a1a1a; }
.ex-title { display: flex; align-items: flex-end; height: 59px; padding-left: 13px; background: #e8e8e8; border-bottom: 2px solid #d9d9d9; }
.tab { display: flex; align-items: center; width: 360px; height: 47px; margin-bottom: -2px; padding: 0 26px 0 14px; background: #f9f9f9; border-radius: 10px 10px 0 0; }
.tab span { margin-left: 15px; flex: 1; }
.plus { height: 47px; margin-left: 27px; }
.wctl { display: flex; align-self: flex-start; margin-left: auto; color: #888; }
.wctl button { width: 70px; height: 42px; justify-content: center; }
.ex-nav { display: flex; align-items: center; height: 74px; padding: 2px 18px 0 6px; background: #f9f9f9; border-bottom: 2px solid #d6d6d6; font-size: 21px; }
.ex-nav button { width: 72px; height: 48px; justify-content: center; }
.ex-nav button:disabled { color: #aaa; }
.addr { display: flex; align-items: center; gap: 28px; flex: 1; height: 48px; margin: 0 11px 0 9px; padding-left: 21px; background: #fdfdfd; border-radius: 6px; }
.addr svg { color: #333; }
.ex-search { display: flex; align-items: center; width: 390px; height: 48px; padding: 0 19px 0 22px; background: #fdfdfd; border-radius: 6px; }
.ex-search input { flex: 1; min-width: 0; }
.ex-tools { display: flex; align-items: center; height: 70px; padding: 3px 34px 0 28px; border-bottom: 2px solid #d6d6d6; }
.ex-tools i { width: 2px; height: 48px; background: #ebebeb; }
.ex-tools .line { color: #444; }
.dn { width: 10px; height: 6px; margin-left: 9px; color: #777; }
.t-new { width: 117px; }
.t-new .i22 { margin-right: 12px; }
.t-off { display: flex; margin: 0 3px 0 2px; }
.t-off button { width: 72px; height: 48px; justify-content: center; }
.ex-tools .t-off .line { color: #bdbdbd; }
.t-off .bl { stroke: #a5cdf0; }
.t-sort { width: 134px; margin-left: 24px; }
.t-view { width: 117px; }
.t-sort .i24, .t-view .i24, .t-det .i24 { margin-right: 12px; }
.t-more { margin-left: 24px; }
.t-det { margin-left: auto; }
.ex-body { display: flex; }
.tree { width: 239px; padding-top: 9px; border-right: 1px solid #efefef; color: #000; }
.tree a { display: flex; align-items: center; height: 48px; margin: 0 3px 0 4px; padding: 0 5px 0 17px; border-radius: 2px; }
.tree a.on { background: #d9d9d9; }
.tree .i24 { margin: 0 5px 0 21px; }
.tree hr { height: 2px; margin: 23px 14px 23px 16px; border: 0; background: #d4d4d4; }
.pin { width: 16px; height: 16px; margin-left: auto; }
.files { flex: 1; width: 0; }
.files th { position: relative; height: 40px; color: #4c607a; border-right: 1px solid #e3e3e3; padding-left: 9px; }
.files .f-name { width: 461px; padding-left: 47px; }
.files .f-date { width: 243px; }
.files .f-type { width: 203px; }
.files .f-size { width: 135px; }
.files th:last-child { border: 0; }
.up { position: absolute; left: 243px; top: 1px; width: 12px; height: 7px; transform: scaleY(-1); }
.files td { height: 43px; padding: 0 0 2px 9px; line-height: 40px; color: #6d6d6d; }
.files td:first-child { padding-left: 32px; color: #000; font-size: 19px; }
.files td:nth-child(2) { font-size: 19px; }
.files td:nth-child(4) { padding-right: 13px; text-align: right; }
.files td div { display: flex; align-items: center; gap: 9px; height: 40px; }
.files .cut td { height: 28px; line-height: 43px; padding-bottom: 0; }
.files .cut td div { height: 28px; overflow: hidden; align-items: flex-end; }
.files .cut td:nth-child(4) div { justify-content: flex-end; }
.cut .fi { margin-bottom: 9px; }
.fi { width: 18px; height: 24px; }
.bar { width: 26px; padding: 411px 11px 0 10px; background: #f0f0f0; }
.bar span { display: block; height: 259px; border-radius: 3px; background: #868686; }
.ex-status { display: flex; align-items: center; height: 35px; padding: 0 10px 0 23px; color: #1e395b; }
.ex-status span { padding-right: 18px; margin: 0 auto 2px 0; border-right: 1px solid #e6e6e6; line-height: 20px; }
.ex-status button { width: 32px; height: 35px; justify-content: center; color: #444; }
.ex-status button.on { background: #e5f3fb; border: 1px solid #2f86cf; }

/* system information */
.sysinfo { position: absolute; left: 1475px; right: 0; top: 1327px; bottom: 0; display: flex; flex-direction: column; background: #f0f0f0; border: solid #c4c4c4; border-width: 1px 0 0 1px; overflow: hidden; }
.sysinfo header { display: flex; align-items: center; gap: 9px; height: 44px; padding-left: 12px; background: #f3f3f3; }
.menu { display: flex; gap: 24px; height: 28px; padding-left: 12px; background: #fff; }
.si-body { display: flex; flex: 1; min-height: 0; gap: 5px; margin: 9px 0 0 6px; font-size: 20px; }
.si-body ul { width: 202px; padding: 1px 4px; background: #fff; border: 1px solid #828790; border-bottom: 0; list-style: none; }
.si-body li { display: flex; gap: 2px; height: 30px; line-height: 30px; }
.root span { padding: 0 2px; background: #f0f0f0; }
.ex { width: 19px; height: 30px; fill: #fff; stroke: #999; }
.ex .dot { stroke: #888; stroke-dasharray: 1 2; }
.ex .pl { stroke: #3a5aa8; }
.si-list { flex: 1; background: #fff; border: 1px solid #828790; border-width: 1px 0 0 1px; overflow: hidden; }
.si-list table { width: 1193px; margin: 1px 0 0 5px; }
.si-list th { height: 34px; border-right: 1px solid #e3e3e3; }
.si-list .k { width: 296px; }
.si-list td, .si-list th { padding-left: 2px; }
.si-list td:nth-child(2), .si-list .v { padding-left: 6px; }
.si-list td:nth-child(2) { font-size: 21px; }
.si-list td { height: 31px; line-height: 29px; padding-bottom: 2px; }
.si-list .on td { background: #0078d7; color: #fff; border-bottom: 2px solid #001a33; padding-bottom: 0; }

/* red annotation frames */
.mark { position: absolute; border: 4px solid #f44b40; border-radius: 6px; }
.mark-proc { left: 361px; top: 177px; width: 648px; height: 81px; }
.mark-cpu { left: 1685px; top: 1721px; width: 1188px; height: 39px; }
```
